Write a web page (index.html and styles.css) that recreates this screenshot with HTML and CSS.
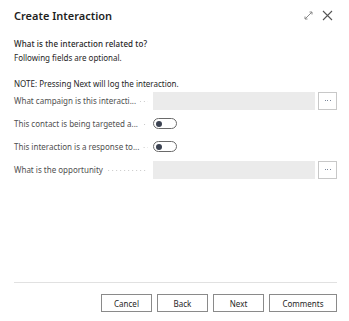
FILE: index.html
```html
<!DOCTYPE html>
<html>
<head>
<meta charset="utf-8">
<link rel="stylesheet" href="styles.css">
</head>
<body>
<div class="dialog">
  <div class="header">
    <div class="title">Create Interaction</div>
    <div class="tools">
      <svg class="icon" width="11" height="11" viewBox="0 0 11 11"><path d="M2 9 L9 2 M6.5 2 H9 V4.5 M2 6.5 V9 H4.5" fill="none" stroke="#8a8a8a" stroke-width="1"/></svg>
      <svg class="icon" width="11" height="11" viewBox="0 0 11 11"><path d="M1 1 L10 10 M10 1 L1 10" fill="none" stroke="#555" stroke-width="1.1"/></svg>
    </div>
  </div>
  <div class="content">
    <div class="q">What is the interaction related to?</div>
    <div class="sub">Following fields are optional.</div>
    <div class="note">NOTE: Pressing Next will log the interaction.</div>
    <div class="rows">
      <div class="row">
        <div class="label"><span class="ltext">What campaign is this interacti...</span><span class="dots"></span></div>
        <div class="field"><div class="input"></div><div class="more"><i></i><i></i><i></i></div></div>
      </div>
      <div class="row">
        <div class="label"><span class="ltext">This contact is being targeted a...</span><span class="dots"></span></div>
        <div class="field"><div class="toggle"><span class="knob"></span></div></div>
      </div>
      <div class="row">
        <div class="label"><span class="ltext">This interaction is a response to...</span><span class="dots"></span></div>
        <div class="field"><div class="toggle"><span class="knob"></span></div></div>
      </div>
      <div class="row">
        <div class="label"><span class="ltext">What is the opportunity</span><span class="dots"></span></div>
        <div class="field"><div class="input"></div><div class="more"><i></i><i></i><i></i></div></div>
      </div>
    </div>
  </div>
  <div class="footer">
    <button class="btn">Cancel</button>
    <button class="btn">Back</button>
    <button class="btn">Next</button>
    <button class="btn wide">Comments</button>
  </div>
</div>
</body>
</html>
```
FILE: styles.css
```css
html, body {
  margin: 0;
  padding: 0;
  background: #fff;
}
body {
  font-family: "Noto Sans", "Open Sans", sans-serif;
  color: #262626;
}
.dialog {
  height: 321px;
  box-sizing: border-box;
  padding: 0 12px 0 14px;
  display: flex;
  flex-direction: column;
}
.header {
  height: 30px;
  display: flex;
  align-items: center;
  justify-content: space-between;
}
.title {
  font-size: 11px;
  font-weight: 600;
  color: #1f1f1f;
  margin-top: 1px;
}
.tools {
  display: flex;
  gap: 8px;
  align-items: center;
  padding-right: 4px;
}
.icon { display: block; }
.content {
  font-size: 8px;
  padding-top: 8px;
}
.q {
  line-height: 12px;
  font-weight: 500;
  letter-spacing: 0.1px;
}
.sub {
  margin-top: 2px;
  line-height: 12px;
}
.note {
  margin-top: 14px;
  line-height: 12px;
}
.rows {
  margin-top: -1px;
}
.row {
  display: flex;
  align-items: center;
  height: 23px;
}
.label {
  width: 139px;
  display: flex;
  align-items: center;
  color: #505050;
  min-width: 0;
}
.ltext {
  white-space: nowrap;
  flex: 0 0 auto;
  font-size: 8px;
}
.dots {
  flex: 1 0 4px;
  height: 1px;
  margin: 1px 5px 0 4px;
  background-image: linear-gradient(to right, #c8c8c8 1px, transparent 1px);
  background-size: 4px 1px;
  background-repeat: repeat-x;
  background-position: right center;
}
.field {
  flex: 1;
  display: flex;
  align-items: center;
  gap: 3px;
}
.input {
  flex: 1;
  height: 18px;
  background: #ebebeb;
}
.more {
  width: 17px;
  height: 16px;
  border: 1px solid #c8c8c8;
  display: flex;
  align-items: center;
  justify-content: center;
  gap: 1.5px;
}
.more i {
  display: block;
  width: 1px;
  height: 1px;
  background: #7a8699;
}
.toggle {
  width: 22px;
  height: 9px;
  border: 1px solid #6a6a6a;
  border-radius: 6px;
  position: relative;
}
.knob {
  position: absolute;
  left: 2px;
  top: 1.5px;
  width: 6px;
  height: 6px;
  border-radius: 50%;
  background: #3c4352;
}
.footer {
  margin-top: auto;
  border-top: 1px solid #e1e1e1;
  display: flex;
  justify-content: flex-end;
  gap: 5px;
  padding: 11px 0 9px;
}
.btn {
  font-family: inherit;
  font-size: 8px;
  color: #262626;
  background: #fff;
  border: 1px solid #8a8a8a;
  border-radius: 0;
  width: 51px;
  height: 18px;
  padding: 0;
  margin: 0;
}
.btn.wide { width: 68px; }
```
